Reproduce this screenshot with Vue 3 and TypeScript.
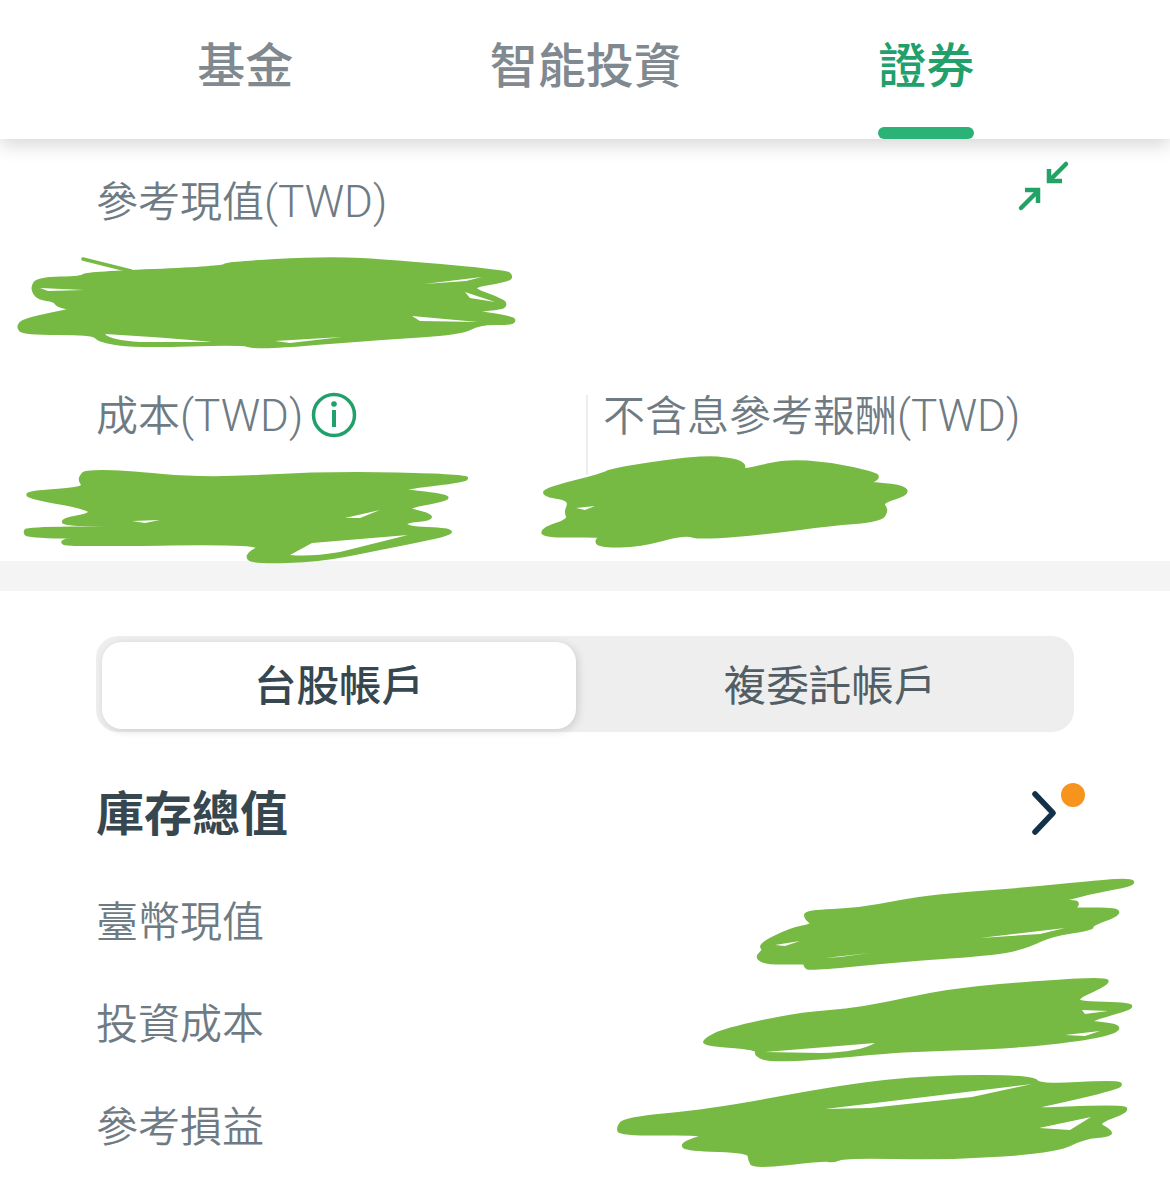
<script setup lang="ts">
interface Scribble {
  body: string
  gaps: string[]
}

const tabs = ['基金', '智能投資', '證券']
const activeTab = 2
const holdings = ['臺幣現值', '投資成本', '參考損益']

// the hand-drawn marks that cover the amounts
const scribbles: Scribble[] = [
  {
    body: '83 274 224 268 224 264 327 258 396 262 506 272 511 276 508 280 465 287 503 301 505 305 501 308 465 311 512 318 514 321 510 323 479 323 461 333 379 338 293 345 255 347 241 343 138 346 100 341 93 333 24 333 18 327 24 320 79 309 58 306 55 300 38 298 32 288 38 279 83 278',
    gaps: ['M424 284 L482 277 L466 281 Z', 'M465 292 L495 302 L470 298 Z', 'M412 316 L478 322 L420 321 Z', 'M105 334 Q 160 337 212 342 L 140 342 Q 110 340 105 334 Z', 'M40 288 L84 290 L48 291 Z', 'M275 341 L342 337 L290 343 Z'],
  },
  {
    body: '82 476 85 472 120 472 205 480 330 473 465 476 467 480 400 488 404 491 446 496 447 499 400 508 430 515 430 519 405 521 405 528 450 530 450 534 380 548 320 560 255 562 245 556 270 542 70 545 59 541 100 537 28 536 25 532 28 529 115 528 117 524 65 524 63 520 90 515 90 508 30 497 27 493 70 490 85 487 80 480',
    gaps: ['M290 555 L312 543 L408 535 L340 552 Q 310 557 290 555 Z', 'M132 521 L160 520 L145 523 Z', 'M345 518 L380 510 L360 518 Z'],
  },
  {
    body: '545 490 603 475 612 470 700 457 735 460 745 466 740 470 750 470 785 461 830 464 875 474 878 478 865 484 900 486 909 493 880 502 887 510 880 520 830 524 770 532 700 538 685 533 640 545 600 546 596 540 607 535 545 536 542 530 570 520 566 512 570 503 565 498 545 495',
    gaps: ['M576 508 L595 506 L585 510 Z'],
  },
  {
    body: '806 912 860 910 925 897 1020 890 1100 882 1130 880 1134 884 1090 892 1043 905 1075 901 1078 905 1070 910 1115 909 1119 914 1090 925 1093 928 1050 935 1030 945 1000 953 900 960 810 969 805 966 807 962 770 963 756 958 765 950 760 945 790 930 815 925 806 918',
    gaps: ['M775 945 L800 941 L785 946 Z', 'M825 958 L870 953 L840 957 Z', 'M980 938 L1065 928 L1040 934 Z'],
  },
  {
    body: '705 1040 725 1030 800 1014 860 1010 950 990 1050 982 1105 979 1108 983 1065 1003 1128 1004 1132 1008 1080 1022 1115 1025 1119 1030 1090 1038 1010 1047 900 1050 820 1058 770 1060 756 1055 758 1048 705 1044',
    gaps: ['M765 1052 L875 1043 Q 860 1052 820 1053 Z', 'M1082 1010 L1108 1011 L1085 1014 Z', 'M1065 1035 L1100 1031 L1085 1036 Z'],
  },
  {
    body: '618 1128 625 1119 712 1111 846 1086 933 1077 1032 1077 1040 1086 1116 1082 1123 1086 1074 1098 1014 1111 1123 1106 1127 1111 1095 1123 1110 1131 1110 1135 1084 1137 1056 1151 951 1158 846 1156 832 1161 825 1159 754 1167 750 1160 749 1151 688 1149 681 1144 716 1133 621 1134',
    gaps: ['M825 1109 L1032 1084 L972 1097 L870 1108 Z', 'M1039 1128 L1091 1117 L1070 1130 Z'],
  },
]

// rounds the outline so it reads as a marker stroke
const smooth = (body: string) => {
  const n = body.split(' ').map(Number)
  const pts: [number, number][] = []
  for (let i = 0; i < n.length; i += 2) pts.push([n[i], n[i + 1]])
  const mid = (a: [number, number], b: [number, number]) => `${(a[0] + b[0]) / 2} ${(a[1] + b[1]) / 2}`
  let d = `M${mid(pts[pts.length - 1], pts[0])}`
  pts.forEach((p, i) => {
    d += ` Q${p[0]} ${p[1]} ${mid(p, pts[(i + 1) % pts.length])}`
  })
  return d + ' Z'
}
</script>

<template>
  <div class="page">
    <header class="tabs">
      <div v-for="(tab, i) in tabs" :key="tab" class="tab" :class="{ active: i === activeTab }">
        <span>{{ tab }}</span>
      </div>
    </header>

    <section class="summary">
      <div class="value-row">
        <span class="label">參考現值<span class="unit">(TWD)</span></span>
        <svg class="collapse" width="56" height="54" viewBox="1016 158 56 54" fill="none" stroke="#22a366" stroke-width="4.5" stroke-linecap="round">
          <path d="M1066 164 L1051 179" />
          <path d="M1049 169 V181 H1062" stroke-linecap="butt" />
          <path d="M1021 208 L1036 193" />
          <path d="M1025 190 H1038 V203" stroke-linecap="butt" />
        </svg>
      </div>
      <div class="cost-row">
        <div class="cost-col">
          <span class="label">成本<span class="unit">(TWD)</span></span>
          <svg class="info" width="46" height="46" viewBox="0 0 46 46">
            <circle cx="23" cy="23" r="20.5" fill="none" stroke="#22a06b" stroke-width="3.5" />
            <circle cx="23" cy="12" r="2.8" fill="#22a06b" />
            <rect x="21" y="18" width="4" height="17" fill="#22a06b" />
          </svg>
        </div>
        <div class="divider"></div>
        <span class="label">不含息參考報酬<span class="unit">(TWD)</span></span>
      </div>
    </section>

    <div class="band"></div>

    <section class="accounts">
      <div class="segment">
        <div class="seg-item on">台股帳戶</div>
        <div class="seg-item">複委託帳戶</div>
      </div>

      <div class="stock-head">
        <h2>庫存總值</h2>
        <div class="more">
          <svg width="26" height="44" viewBox="0 0 26 44" fill="none" stroke="#12324a" stroke-width="5.5" stroke-linecap="round" stroke-linejoin="round">
            <path d="M4 3 L22 22 L4 41" />
          </svg>
          <i class="dot"></i>
        </div>
      </div>

      <div v-for="row in holdings" :key="row" class="stock-row">{{ row }}</div>
    </section>

    <svg class="marks" width="1170" height="1192" viewBox="0 0 1170 1192">
      <path d="M83 259 L131 271" fill="none" stroke="#76b943" stroke-width="3.5" stroke-linecap="round" />
      <g v-for="(s, i) in scribbles" :key="i">
        <path :d="smooth(s.body)" fill="#76b943" stroke="#76b943" stroke-width="4" stroke-linejoin="round" />
        <path v-for="gap in s.gaps" :key="gap" :d="gap" fill="#fff" />
      </g>
    </svg>
  </div>
</template>

<style>
body {
  background: #fff;
}
</style>

<style scoped>
.page {
  position: relative;
  width: 1170px;
  height: 1192px;
  overflow: hidden;
  background: #fff;
  font-family: Roboto, "Noto Sans CJK TC", sans-serif;
}

.tabs {
  position: relative;
  z-index: 1;
  display: grid;
  grid-template-columns: repeat(3, 340.5px);
  height: 139px;
  padding-left: 75px;
  background: #fff;
  box-shadow: 0 6px 18px rgba(0, 0, 0, 0.16);
}

.tab {
  position: relative;
  display: flex;
  justify-content: center;
  padding-top: 33px;
  font-size: 48px;
  line-height: 68px;
  font-weight: 500;
  color: #7f898f;
}

.tab span {
  position: relative;
  height: 106px;
}

.tab.active {
  color: #22a06b;
}

.tab.active span::after {
  content: "";
  position: absolute;
  left: 0;
  right: 0;
  bottom: 0;
  height: 12px;
  border-radius: 6px;
  background: #2bb277;
}

.summary {
  height: 422px;
  padding: 34px 0 0 96px;
  box-sizing: border-box;
}

.label {
  font-size: 42px;
  line-height: 58px;
  font-weight: 350;
  color: #6f7b83;
}

.unit {
  font-size: 44px;
  font-weight: 300;
}

.value-row {
  display: flex;
  justify-content: space-between;
  height: 214px;
  padding-right: 98px;
}

.collapse {
  margin-top: -15px;
}

.cost-row {
  display: flex;
}

.cost-col {
  display: flex;
  align-items: flex-start;
  gap: 8px;
  width: 490px;
}

.info {
  margin-top: 5px;
}

.divider {
  width: 2px;
  height: 80px;
  margin: 8px 15px 0 0;
  background: #eeeeee;
}

.band {
  height: 30px;
  background: #f4f4f4;
}

.accounts {
  padding: 45px 0 0 96px;
}

.segment {
  display: flex;
  box-sizing: border-box;
  width: 978px;
  height: 96px;
  padding: 6px 0 3px 6px;
  border-radius: 22px;
  background: #eeeeee;
}

.seg-item {
  display: flex;
  flex: 1;
  align-items: center;
  justify-content: center;
  padding: 0 0 6px 10px;
  font-size: 42.5px;
  color: #525e65;
  font-weight: 400;
}

.seg-item.on {
  flex: none;
  width: 474px;
  padding-left: 0;
  border-radius: 20px;
  background: #fff;
  color: #37474f;
  font-weight: 500;
  box-shadow: 2px 2px 8px rgba(0, 0, 0, 0.14);
}

.stock-head {
  display: flex;
  align-items: center;
  justify-content: space-between;
  height: 58px;
  margin-top: 52px;
  padding-right: 113px;
}

.stock-head h2 {
  margin: 0 0 6px;
  font-size: 48px;
  font-weight: 700;
  color: #37474f;
}

.more {
  position: relative;
  display: flex;
}

.dot {
  position: absolute;
  left: 30px;
  top: -8px;
  width: 24px;
  height: 24px;
  border-radius: 50%;
  background: #f7941d;
}

.stock-head + .stock-row {
  margin-top: 25px;
}

.stock-row {
  display: flex;
  align-items: center;
  height: 102.5px;
  font-size: 42px;
  font-weight: 350;
  color: #6f7b83;
}

.marks {
  position: absolute;
  left: 0;
  top: 0;
  z-index: 2;
  pointer-events: none;
}
</style>
